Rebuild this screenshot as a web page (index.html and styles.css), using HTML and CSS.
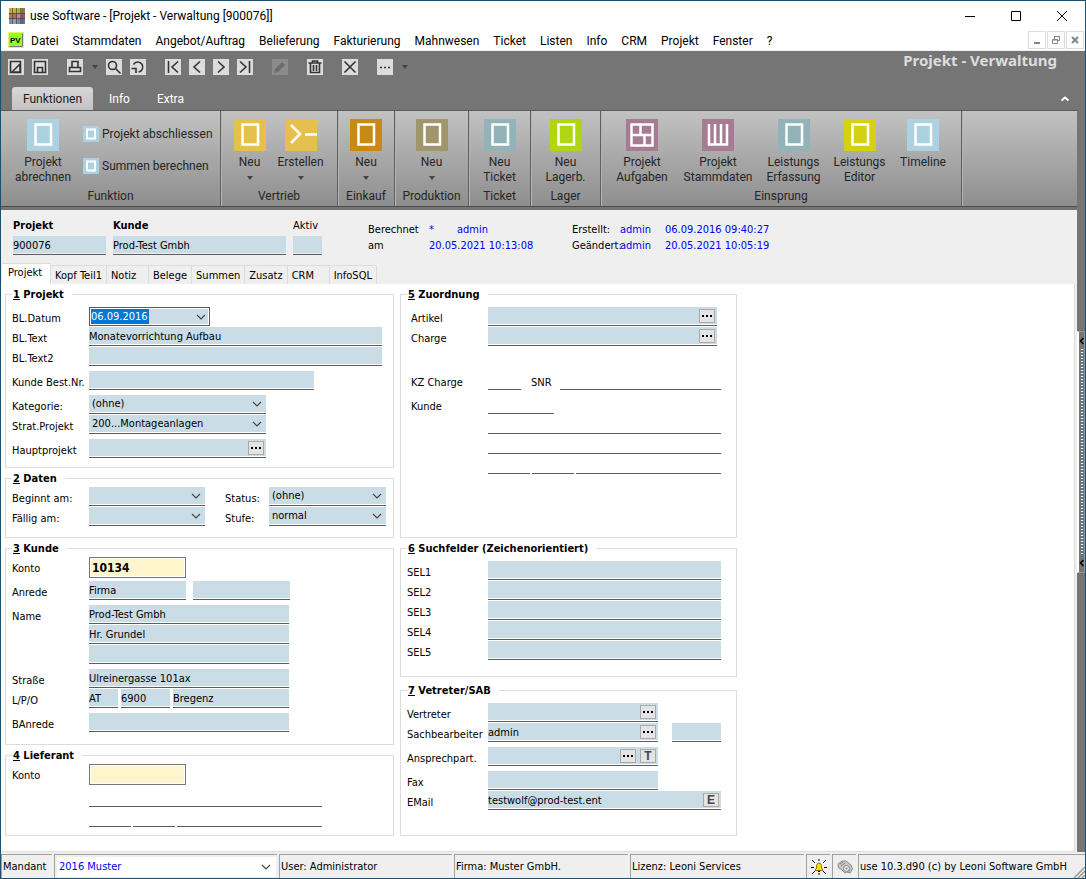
FILE: index.html
```html
<!DOCTYPE html>
<html lang="de">
<head>
<meta charset="utf-8">
<title>use Software - [Projekt - Verwaltung [900076]]</title>
<link rel="stylesheet" href="styles.css">
</head>
<body>
<svg class="defs" aria-hidden="true">
  <symbol id="chev" viewBox="0 0 10 6"><path d="M1 1l4 4 4-4" fill="none" stroke="#444" stroke-width="1.1"/></symbol>
  <symbol id="tri" viewBox="0 0 6 4"><path d="M0 0h6L3 4z" fill="#444"/></symbol>
  <symbol id="dots" viewBox="0 0 10 2"><path d="M0 0h2v2H0zM4 0h2v2H4zM8 0h2v2H8z" fill="#000"/></symbol>
  <symbol id="doc" viewBox="0 0 32 32"><path d="M8.500 5.500h15.500v20H8.500z" fill="none" stroke="#fff" stroke-width="2.500"/></symbol>
  <symbol id="docs" viewBox="0 0 16 16"><path d="M4 3.500h8v9H4z" fill="none" stroke="#fff" stroke-width="2"/></symbol>
</svg>
<div class="window">
  <header class="titlebar">
    <svg class="logo" width="16" height="16" viewBox="0 0 16 16"><path fill="#e0aa38" d="M0 0h4v5H0z"/><path fill="#c0b048" d="M4 0h4v5H4z"/><path fill="#a8cc38" d="M8 0h4v5H8z"/><path fill="#8d7a5c" d="M12 0h4v5h-4z"/><path fill="#d6764c" d="M0 5h4v6H0z"/><path fill="#9c7478" d="M4 5h4v6H4z"/><path fill="#d78a8a" d="M8 5h4v6H8z"/><path fill="#8d6070" d="M12 5h4v6h-4z"/><path fill="#7da0b8" d="M0 11h4v5H0z"/><path fill="#9898b4" d="M4 11h4v5H4z"/><path fill="#7698ac" d="M8 11h4v5H8z"/><path fill="#6c7080" d="M12 11h4v5h-4z"/><path d="M3.500 0v16M7.500 0v16M11.500 0v16M0 5.500h16M0 10.500h16" stroke="#4a3c40" stroke-opacity=".7"/><path d="M1.500 0v16M9.500 0v16M13.500 0v16" stroke="#0002"/></svg>
    <h1 class="caption">use Software - [Projekt - Verwaltung [900076]]</h1>
    <div class="wincontrols">
      <button aria-label="Minimieren"><svg width="12" height="12"><path d="M1 6.500h10" stroke="#000"/></svg></button>
      <button aria-label="Maximieren"><svg width="12" height="12"><path d="M1.500 1.500h9v9h-9z" fill="none" stroke="#000"/></svg></button>
      <button aria-label="Schließen"><svg width="12" height="12"><path d="M1 1l10 10M11 1L1 11" stroke="#000"/></svg></button>
    </div>
  </header>
  <nav class="menubar">
    <svg class="pv" width="16" height="16" viewBox="0 0 16 16"><path d="M.5.5h15v15H.5z" fill="#9f2" stroke="#ee3" stroke-dasharray="1 1"/><path d="M1.500 14.500h13v-13" fill="none" stroke="#777"/><text x="2" y="11" font-size="8" font-weight="bold" font-family="Liberation Sans">PV</text></svg>
    <a href="#">Datei</a><a href="#">Stammdaten</a><a href="#">Angebot/Auftrag</a><a href="#">Belieferung</a><a href="#">Fakturierung</a><a href="#">Mahnwesen</a><a href="#">Ticket</a><a href="#">Listen</a><a href="#">Info</a><a href="#">CRM</a><a href="#">Projekt</a><a href="#">Fenster</a><a href="#">?</a>
    <div class="mdi">
      <button aria-label="Fenster minimieren"><svg width="10" height="10"><path d="M2 8h6" stroke="#7b8794" stroke-width="2"/></svg></button>
      <button aria-label="Fenster wiederherstellen"><svg width="10" height="10"><path d="M3.500 4V1.500h5v4H7M1.500 4.500h5v4h-5zM3 1.500h6M1 5h6" fill="none" stroke="#7b8794" stroke-width="1"/></svg></button>
      <button aria-label="Fenster schließen"><svg width="10" height="10"><path d="M2 2l6 6M8 2L2 8" stroke="#7b8794" stroke-width="2"/></svg></button>
    </div>
  </nav>
  <div class="work">
    <div class="main">
      <div class="toolbar">
        <div class="tools">
          <button class="tool" aria-label="Neu"><svg width="16" height="16"><path d="M2.500 2.500h10v11h-10zM4 13l8-8M12 7v6H6" /></svg></button>
          <button class="tool" aria-label="Speichern"><svg width="16" height="16"><path d="M2.500 2.500h11v11h-11zM5.500 13V8.500h5V13"/></svg></button>
          <button class="tool sep" aria-label="Drucken"><svg width="16" height="16"><path d="M5 8V2.500h6V8M2.500 8.500h11v4h-11z"/></svg></button>
          <button class="drop" aria-label="Druckoptionen"><svg width="6" height="4"><use href="#tri"/></svg></button>
          <button class="tool" aria-label="Suchen"><svg width="16" height="16"><circle cx="6.500" cy="6.500" r="4"/><path d="M9.500 9.500l5 5"/></svg></button>
          <button class="tool" aria-label="Aktualisieren"><svg width="16" height="16"><path d="M3.500 5.500a5 5 0 1 1 5 7.500M1.500 9.500h4.500v4.500"/></svg></button>
          <button class="tool sep" aria-label="Erster"><svg width="16" height="16"><path d="M3.500 2v12M13 2.500L7 8l6 5.500"/></svg></button>
          <button class="tool" aria-label="Zurück"><svg width="16" height="16"><path d="M11 2.500L5 8l6 5.500"/></svg></button>
          <button class="tool" aria-label="Weiter"><svg width="16" height="16"><path d="M5 2.500L11 8l-6 5.500"/></svg></button>
          <button class="tool" aria-label="Letzter"><svg width="16" height="16"><path d="M12.500 2v12M3 2.500L9 8l-6 5.500"/></svg></button>
          <button class="tool sep off" aria-label="Bearbeiten" disabled><svg width="16" height="16"><path class="pen" d="M2 14l1-4 7-7 3 3-7 7z"/></svg></button>
          <button class="tool sep" aria-label="Löschen"><svg width="16" height="16"><path d="M1.500 4h13M5.500 4V2h5v2M3.500 4v9.500h9V4M6.500 6v6M9.500 6v6"/></svg></button>
          <button class="tool sep" aria-label="Abbrechen"><svg width="16" height="16"><path d="M2.500 2.500l11 11M13.500 2.500l-11 11"/></svg></button>
          <button class="tool sep" aria-label="Mehr"><svg width="16" height="16"><path d="M3 8.500h2M7 8.500h2M11 8.500h2"/></svg></button>
          <button class="drop" aria-label="Weitere Optionen"><svg width="6" height="4"><use href="#tri"/></svg></button>
        </div>
        <h2 class="formtitle">Projekt - Verwaltung</h2>
      </div>
      <div class="ribbontabs">
        <button class="rtab on">Funktionen</button><button class="rtab">Info</button><button class="rtab">Extra</button>
        <button class="collapse" aria-label="Menüband einklappen"><svg width="10" height="7"><path d="M1.500 5.500L5 2.500l3.500 3" fill="none" stroke="#fff" stroke-width="2"/></svg></button>
      </div>
      <div class="ribbon">
        <section class="group">
          <div class="items fn">
            <button class="big"><svg class="sky" width="32" height="32"><use href="#doc"/></svg><span>Projekt abrechnen</span></button>
            <div class="stack">
              <button class="small"><svg class="sky" width="16" height="16"><use href="#docs"/></svg>Projekt abschliessen</button>
              <button class="small"><svg class="sky" width="16" height="16"><use href="#docs"/></svg>Summen berechnen</button>
            </div>
          </div>
          <h3>Funktion</h3>
        </section>
        <section class="group">
          <div class="items two">
            <button class="big"><svg class="amber" width="32" height="32"><use href="#doc"/></svg><span>Neu</span><svg class="arr" width="6" height="4"><use href="#tri"/></svg></button>
            <button class="big"><svg class="amber" width="32" height="32"><path d="M6 6l9 9-9 9M20 15.500h12" fill="none" stroke="#fff" stroke-width="2.500"/></svg><span>Erstellen</span><svg class="arr" width="6" height="4"><use href="#tri"/></svg></button>
          </div>
          <h3>Vertrieb</h3>
        </section>
        <section class="group">
          <div class="items"><button class="big"><svg class="orange" width="32" height="32"><use href="#doc"/></svg><span>Neu</span><svg class="arr" width="6" height="4"><use href="#tri"/></svg></button></div>
          <h3>Einkauf</h3>
        </section>
        <section class="group">
          <div class="items"><button class="big"><svg class="khaki" width="32" height="32"><use href="#doc"/></svg><span>Neu</span><svg class="arr" width="6" height="4"><use href="#tri"/></svg></button></div>
          <h3>Produktion</h3>
        </section>
        <section class="group">
          <div class="items"><button class="big"><svg class="teal" width="32" height="32"><use href="#doc"/></svg><span>Neu<br>Ticket</span></button></div>
          <h3>Ticket</h3>
        </section>
        <section class="group">
          <div class="items"><button class="big"><svg class="lime" width="32" height="32"><use href="#doc"/></svg><span>Neu<br>Lagerb.</span></button></div>
          <h3>Lager</h3>
        </section>
        <section class="group">
          <div class="items five">
            <button class="big"><svg class="mauve" width="32" height="32"><path d="M5.500 5.500h21v21h-21zM5 16h22M14.500 5v11M18.500 16v11" fill="none" stroke="#fff" stroke-width="2.500"/></svg><span>Projekt Aufgaben</span></button>
            <button class="big"><svg class="mauve" width="32" height="32"><path d="M7 5v20.500h18V5M13 5v20M19 5v20" fill="none" stroke="#fff" stroke-width="2.500"/></svg><span>Projekt Stammdaten</span></button>
            <button class="big"><svg class="teal" width="32" height="32"><use href="#doc"/></svg><span>Leistungs Erfassung</span></button>
            <button class="big"><svg class="yellow" width="32" height="32"><use href="#doc"/></svg><span>Leistungs Editor</span></button>
            <button class="big"><svg class="sky" width="32" height="32"><use href="#doc"/></svg><span>Timeline</span></button>
          </div>
          <h3>Einsprung</h3>
        </section>
      </div>
      <div class="head">
        <div class="hfield w93"><label class="b" for="pnr">Projekt</label><input class="f" id="pnr" value="900076"></div>
        <div class="hfield w173"><label class="b" for="kd">Kunde</label><input class="f" id="kd" value="Prod-Test Gmbh"></div>
        <div class="hfield w29"><label for="aktiv">Aktiv</label><input class="f" id="aktiv"></div>
        <div class="meta calc"><span>Berechnet</span><span class="blue">*</span><span class="blue">admin</span><span>am</span><span class="blue wide">20.05.2021 10:13:08</span></div>
        <div class="meta made"><span>Erstellt:</span><span class="blue">admin</span><span class="blue">06.09.2016 09:40:27</span><span>Geändert:</span><span class="blue">admin</span><span class="blue">20.05.2021 10:05:19</span></div>
      </div>
      <div class="tabs" role="tablist">
        <button class="tab on" role="tab">Projekt</button><button class="tab" role="tab">Kopf Teil1</button><button class="tab" role="tab">Notiz</button><button class="tab" role="tab">Belege</button><button class="tab" role="tab">Summen</button><button class="tab" role="tab">Zusatz</button><button class="tab" role="tab">CRM</button><button class="tab" role="tab">InfoSQL</button>
      </div>
      <main class="panel">
        <div class="col">
          <fieldset class="projekt">
            <legend><u>1</u> Projekt</legend>
            <div class="row gap"><label for="dat">BL.Datum</label><div class="combo w121"><input id="dat" class="marked" value="06.09.2016"><button aria-label="Kalender"><svg width="10" height="6"><use href="#chev"/></svg></button></div></div>
            <div class="row"><label for="t1">BL.Text</label><input class="f w293" id="t1" value="Monatevorrichtung Aufbau"></div>
            <div class="row"><label for="t2">BL.Text2</label><input class="f w293" id="t2"></div>
            <div class="row gap"><label for="best">Kunde Best.Nr.</label><input class="f w225" id="best"></div>
            <div class="row gap"><label for="kat">Kategorie:</label><div class="sel w177"><select id="kat"><option>(ohne)</option></select><svg width="10" height="6"><use href="#chev"/></svg></div></div>
            <div class="row"><label for="strat">Strat.Projekt</label><div class="sel w177"><select id="strat"><option>200...Montageanlagen</option></select><svg width="10" height="6"><use href="#chev"/></svg></div></div>
            <div class="row gap"><label for="haupt">Hauptprojekt</label><div class="f pick w177"><input id="haupt"><button aria-label="Hauptprojekt wählen"><svg width="10" height="2"><use href="#dots"/></svg></button></div></div>
          </fieldset>
          <fieldset class="daten">
            <legend><u>2</u> Daten</legend>
            <div class="row"><label for="beg">Beginnt am:</label><div class="sel w116"><select id="beg"><option></option></select><svg width="10" height="6"><use href="#chev"/></svg></div><label class="second" for="stat">Status:</label><div class="sel w117"><select id="stat"><option>(ohne)</option></select><svg width="10" height="6"><use href="#chev"/></svg></div></div>
            <div class="row"><label for="fael">Fällig am:</label><div class="sel w116"><select id="fael"><option></option></select><svg width="10" height="6"><use href="#chev"/></svg></div><label class="second" for="stufe">Stufe:</label><div class="sel w117"><select id="stufe"><option>normal</option></select><svg width="10" height="6"><use href="#chev"/></svg></div></div>
          </fieldset>
        </div>
        <fieldset class="right">
          <legend><u>5</u> Zuordnung</legend>
          <div class="row gap in"><label for="art">Artikel</label><div class="f pick w229"><input id="art"><button aria-label="Artikel wählen"><svg width="10" height="2"><use href="#dots"/></svg></button></div></div>
          <div class="row in"><label for="cha">Charge</label><div class="f pick w229"><input id="cha"><button aria-label="Charge wählen"><svg width="10" height="2"><use href="#dots"/></svg></button></div></div>
          <div class="row in far"><label for="kz">KZ Charge</label><input class="l w33" id="kz"><label class="snr" for="snr">SNR</label><input class="l w161" id="snr"></div>
          <div class="row gap in"><label for="k5">Kunde</label><input class="l w66" id="k5"></div>
          <div class="row bare"><input class="l w233" aria-label="Kunde Name"></div>
          <div class="row bare"><input class="l w233" aria-label="Kunde Straße"></div>
          <div class="row bare g2"><input class="l w42" aria-label="Land"><input class="l w42" aria-label="PLZ"><input class="l w145" aria-label="Ort"></div>
        </fieldset>
        <div class="col">
          <fieldset class="kunde">
            <legend><u>3</u> Kunde</legend>
            <div class="row"><label for="k3">Konto</label><input class="konto" id="k3" value="10134"></div>
            <div class="row gap"><label for="anr">Anrede</label><input class="f w97" id="anr" value="Firma"><input class="f w97 next" aria-label="Titel"></div>
            <div class="row gap"><label for="name">Name</label><input class="f w200" id="name" value="Prod-Test Gmbh"></div>
            <div class="row bare"><input class="f w200" aria-label="Name 2" value="Hr. Grundel"></div>
            <div class="row bare"><input class="f w200" aria-label="Name 3"></div>
            <div class="row gap"><label for="str">Straße</label><input class="f w200" id="str" value="Ulreinergasse 101ax"></div>
            <div class="row"><label for="lpo">L/P/O</label><div class="g3"><input class="f w29" id="lpo" value="AT"><input class="f w49" aria-label="PLZ" value="6900"><input class="f w116" aria-label="Ort" value="Bregenz"></div></div>
            <div class="row gap"><label for="ban">BAnrede</label><input class="f w200" id="ban"></div>
          </fieldset>
          <fieldset class="grow">
            <legend><u>4</u> Lieferant</legend>
            <div class="row"><label for="k4">Konto</label><input class="konto" id="k4"></div>
            <div class="row gap bare"><input class="l w233" aria-label="Lieferant Name"></div>
            <div class="row bare g2"><input class="l w42" aria-label="Land"><input class="l w42" aria-label="PLZ"><input class="l w145" aria-label="Ort"></div>
          </fieldset>
        </div>
        <div class="col right wide">
          <fieldset class="such">
            <legend><u>6</u> Suchfelder (Zeichenorientiert)</legend>
            <div class="row gap"><label for="s1">SEL1</label><input class="f w233" id="s1"></div>
            <div class="row"><label for="s2">SEL2</label><input class="f w233" id="s2"></div>
            <div class="row"><label for="s3">SEL3</label><input class="f w233" id="s3"></div>
            <div class="row"><label for="s4">SEL4</label><input class="f w233" id="s4"></div>
            <div class="row"><label for="s5">SEL5</label><input class="f w233" id="s5"></div>
          </fieldset>
          <fieldset class="grow">
            <legend><u>7</u> Vetreter/SAB</legend>
            <div class="row gap"><label for="ver">Vertreter</label><div class="f pick w170"><input id="ver"><button aria-label="Vertreter wählen"><svg width="10" height="2"><use href="#dots"/></svg></button></div></div>
            <div class="row"><label for="sab">Sachbearbeiter</label><div class="f pick w170"><input id="sab" value="admin"><button aria-label="Sachbearbeiter wählen"><svg width="10" height="2"><use href="#dots"/></svg></button></div><input class="f w49 after" aria-label="Kürzel"></div>
            <div class="row gap"><label for="ans">Ansprechpart.</label><div class="f pick w170"><input id="ans"><button aria-label="Ansprechpartner wählen"><svg width="10" height="2"><use href="#dots"/></svg></button><button>T</button></div></div>
            <div class="row gap"><label for="fax">Fax</label><input class="f w170" id="fax"></div>
            <div class="row"><label for="mail">EMail</label><div class="f pick w233"><input id="mail" value="testwolf@prod-test.ent"><button>E</button></div></div>
          </fieldset>
        </div>
      </main>
    </div>
    <div class="side">
      <div class="splitter"><svg width="6" height="8"><path d="M4.500 1L1.500 4l3 3" fill="none" stroke="#000" stroke-width="1.500"/></svg><i></i><svg width="6" height="8"><path d="M4.500 1L1.500 4l3 3" fill="none" stroke="#000" stroke-width="1.500"/></svg></div>
    </div>
  </div>
  <footer class="status">
    <label class="cell" for="mand">Mandant</label>
    <div class="cell mand"><select id="mand"><option>2016 Muster</option></select><svg width="10" height="6"><use href="#chev"/></svg></div>
    <span class="cell">User: Administrator</span>
    <span class="cell">Firma: Muster GmbH.</span>
    <span class="cell">Lizenz: Leoni Services</span>
    <span class="cell icon"><svg width="16" height="16"><path d="M1 1l3 3M15 1l-3 3M0 8.500h3M16 8.500h-3M1 15l3-3M15 15l-3-3M8 0v2M8 14v2" stroke="#000"/><path d="M4 11.500h8L10.500 9V6.500Q10 4 8 4T5.500 6.500V9z" fill="#fd0" stroke="#8a7400"/><path d="M7 12.500h2" stroke="#000"/></svg></span>
    <span class="cell icon"><svg width="16" height="16"><path d="M1 5l4-3 4 0 5 4 1.500 4-2.500 4-3-1-2 1-4-4-2.500-1z" fill="#c8c8c8" stroke="#8a8a8a"/><circle cx="9.500" cy="9.500" r="3" fill="#e8e8e8" stroke="#888"/><path d="M3 5l3-2M4 7l4-3M11 12l2-1" stroke="#888"/><circle cx="9.500" cy="9.500" r="1" fill="#888"/></svg></span>
    <span class="cell last">use 10.3.d90 (c) by Leoni Software GmbH<svg class="grip" width="12" height="12"><path d="M1 12L12 1M5 12l7-7M9 12l3-3" stroke="#999" stroke-width="1.500"/></svg></span>
  </footer>
</div>
</body>
</html>
```

FILE: styles.css
```css
* { box-sizing: border-box; }
body {
  margin: 0;
  font: 11px/14px "DejaVu Sans Condensed", "DejaVu Sans", sans-serif;
  color: #000;
}
button, input, select { font: inherit; color: inherit; margin: 0; padding: 0; border: 0; background: none; border-radius: 0; outline: 0; }
input { min-width: 0; }
select { appearance: none; }
svg { display: block; flex: none; }
h1, h2, h3 { margin: 0; font-weight: normal; }
.defs { position: absolute; width: 0; height: 0; }

.window { display: flex; flex-direction: column; min-height: 100vh; border: 1px solid #1d4f70; background: #efefef; }

/* title and menu */
.titlebar, .menubar, .toolbar, .ribbontabs, .big, .small { font-family: Roboto, "Open Sans", sans-serif; font-size: 12px; }
.titlebar { display: flex; align-items: center; height: 29px; padding-left: 8px; background: #fff; }
.caption { flex: 1; margin-left: 5px; font-size: 12px; }
.wincontrols { display: flex; }
.wincontrols button { width: 46px; height: 29px; display: grid; place-items: center; }
.menubar { display: flex; align-items: center; height: 21px; padding-left: 7px; background: #fff; border-bottom: 1px solid #f0f0f0; }
.menubar a { margin-left: 14px; padding-top: 2px; color: #000; text-decoration: none; }
.menubar .pv + a { margin-left: 7px; }
.mdi { display: flex; gap: 1px; margin-left: auto; padding-right: 1px; }
.mdi button { width: 18px; height: 18px; border: 1px solid #ddd; display: grid; place-items: center; }

.work { flex: 1; display: flex; background: #757575; }
.main { flex: 1; min-width: 0; display: flex; flex-direction: column; }
.side { width: 8px; display: flex; flex-direction: column; }
.splitter { height: 242px; margin-top: 280px; border: 1px solid #999; border-left: 2px solid #fff; display: flex; flex-direction: column; align-items: center; padding: 5px 0; }
.splitter i { flex: 1; width: 2px; margin: 4px 0; background: repeating-linear-gradient(#fff 0 1px, #4a7899 1px 3px); }

/* toolbar */
.toolbar { display: flex; justify-content: space-between; height: 36px; padding-left: 7px; }
.tools { display: flex; gap: 8px; padding-top: 8px; }
.tool { width: 16px; height: 16px; background: #dcdcdc; }
.tool path, .tool circle { fill: none; stroke: #333; stroke-width: 1.6; }
.tool.sep { margin-left: 11px; }
.tool.off { background: #8b8b8b; }
.tool .pen { fill: #6d6d6d; stroke: none; }
.drop { width: 7px; height: 16px; display: grid; place-items: center; }
.formtitle { margin-right: 20px; font: bold 15px/19px "Noto Sans", "Open Sans", sans-serif; color: #ddd; }
.ribbontabs { display: flex; height: 23px; padding-left: 11px; }
.rtab { color: #fff; margin-right: 27px; }
.rtab.on { width: 81px; margin-right: 16px; background: linear-gradient(#d8d8d8, #c2c2c2); color: #222; border-radius: 3px 3px 0 0; }
.collapse { margin-left: auto; padding-right: 7px; }

/* ribbon */
.ribbon { display: grid; grid-template-columns: 220px 117px 57px 74px 62px 70px 361px 1fr; height: 97px; border-top: 1px solid #5a5a5a; border-bottom: 1px solid #4c4c4c; background: linear-gradient(#c2c2c2, #8e8e8e); margin-bottom: 3px; }
.group { display: flex; flex-direction: column; border-right: 1px solid #606060; box-shadow: 1px 0 #b4b4b4; color: #262626; }
.group h3 { font: 12px/16px Roboto, "Open Sans", sans-serif; text-align: center; padding-bottom: 2px; }
.items { flex: 1; display: flex; justify-content: center; padding-top: 8px; }
.items.fn { justify-content: flex-start; padding-left: 12px; }
.items.fn .big { width: 60px; }
.items.two, .items.five { display: grid; justify-content: start; padding-left: 3px; grid-template-columns: 51px 51px; }
.items.five { grid-template-columns: 76px 76px 75px 57px 70px; }
.big { display: flex; flex-direction: column; align-items: center; justify-content: flex-start; line-height: 15px; }
.big span { margin-top: 4px; }
.arr { margin-top: 6px; }
.stack { display: flex; flex-direction: column; gap: 16px; margin: 7px 0 0 10px; }
.small { display: flex; align-items: center; gap: 3px; height: 16px; white-space: nowrap; }
.sky { background: #acd1e1; }
.amber { background: #e6c04c; }
.orange { background: #c98a14; }
.khaki { background: #a1956b; }
.teal { background: #92b3b8; }
.lime { background: #b0d613; }
.mauve { background: #a67b94; }
.yellow { background: #d6d012; }

/* record header */
.head { display: flex; gap: 7px; height: 53px; padding: 9px 0 0 12px; background: #efefef; }
.hfield { display: flex; flex-direction: column; gap: 3px; }
.hfield .f { width: 100%; }
.b { font-weight: bold; }
.blue { color: #00e; }
.meta { display: grid; line-height: 16px; align-content: start; padding-top: 3px; }
.calc { grid-template-columns: 61px 28px 1fr; width: 158px; margin-left: 39px; }
.calc .wide { grid-column: 2 / 4; white-space: nowrap; }
.made { grid-template-columns: 48px 45px auto; margin-left: 39px; }

.tabs { display: flex; align-items: flex-end; height: 21px; padding-left: 1px; background: #efefef; }
.tab { height: 19px; padding: 1px 4px 0; text-align: left; border: 1px solid #ddd; border-left: 0; border-bottom: 0; white-space: nowrap; min-width: 42px; }
.tab.on { height: 21px; background: #fff; padding: 0 6px 2px; min-width: 49px; }

/* form */
.panel { flex: 1; display: grid; grid-template-columns: 389px 337px; column-gap: 6px; row-gap: 2px; align-content: start; padding: 2px 0 14px 4px; background: #fff; border: 1px solid #ddd; border-left: 0; border-top: 0; box-shadow: 2px 0 #efefef; margin-right: 2px; }
.col { display: flex; flex-direction: column; gap: 2px; }
.col.wide { gap: 5px; }
.grow { flex: 1; }
fieldset { margin: 0; min-width: 0; padding: 1px 6px 7px; border: 1px solid #dcdcdc; }
legend { font-weight: bold; line-height: 14px; padding: 2px 8px 0 1px; }
.projekt { padding-bottom: 8px; }
.daten { padding-bottom: 10px; }
.kunde { padding-bottom: 11px; }
.such { padding-bottom: 15px; }
.row { display: flex; height: 20px; }
.row.gap { margin-top: 4px; }
.row.far { margin-top: 24px; }
.row > label { width: 77px; padding-top: 5px; white-space: nowrap; flex: none; }
.right .row > label { width: 81px; }
.right .row.in > label { padding-left: 4px; }
.row.bare { padding-left: 77px; }
.right .row.bare { padding-left: 81px; }
.row > label.second { width: 64px; padding-left: 20px; }
.right .row.in > label.snr { width: 39px; padding-left: 10px; }
.g2 { gap: 2px; }
.g3 { display: flex; gap: 3px; }
.next { margin-left: 7px; }
.after { margin-left: 14px; }
.f, .sel { height: 19px; border-bottom: 1px solid #5c5c5c; background: linear-gradient(#cadce5 17px, #fff 17px); }
.head .f { background: linear-gradient(#cadce5 17px, #efefef 17px); }
input.f { padding: 1px 0; }
.l { height: 19px; border-bottom: 1px solid #5c5c5c; }
.pick { display: flex; gap: 4px; padding: 2px 2px 0 0; }
.pick input { flex: 1; height: 15px; }
.pick button { width: 16px; height: 14px; border: 1px solid #aaa; background: #e4e4e4; display: grid; place-items: center; font: bold 12px/12px "Liberation Sans", sans-serif; color: #444; }
.sel, .mand { position: relative; }
.sel select { width: 100%; height: 17px; padding-left: 3px; }
.sel svg { position: absolute; right: 4px; top: 6px; pointer-events: none; }
.combo { display: flex; align-items: center; justify-content: space-between; height: 19px; border: 1px solid #5c5c5c; padding: 1px; background: #cadce5; box-shadow: inset 0 0 0 1px #fff; }
.combo button { width: 14px; display: grid; place-items: center; }
.marked { width: 58px; height: 15px; background: #0078d7; color: #fff; }
.konto { width: 97px; height: 21px; border: 1px solid #777; background: #fff5cd; box-shadow: inset 0 0 0 1px #fff; padding: 0 2px; font-weight: bold; font-size: 12px; }

.w29 { width: 29px; } .w33 { width: 33px; } .w42 { width: 42px; } .w49 { width: 49px; }
.w66 { width: 66px; } .w93 { width: 93px; } .w97 { width: 97px; } .w116 { width: 116px; }
.w117 { width: 117px; } .w121 { width: 121px; } .w145 { width: 145px; } .w161 { width: 161px; }
.w170 { width: 170px; } .w173 { width: 173px; } .w177 { width: 177px; } .w200 { width: 200px; }
.w225 { width: 225px; } .w229 { width: 229px; } .w233 { width: 233px; } .w293 { width: 293px; }

/* status bar */
.status { display: grid; grid-template-columns: 51px 223px 173px 174px 174px 24px 24px 1fr; gap: 2px; height: 26px; padding-top: 2px; }
.cell { display: flex; align-items: center; border-top: 1px solid #a0a0a0; border-left: 1px solid #a0a0a0; padding-left: 1px; white-space: nowrap; position: relative; }
.mand { padding: 1px 1px 0 2px; }
.mand select { width: 100%; height: 20px; background: #fff; color: #00e; padding-left: 2px; }
.mand svg { position: absolute; right: 6px; top: 9px; pointer-events: none; }
.icon { justify-content: center; padding: 0; }
.grip { position: absolute; right: 0; bottom: 0; }
```
